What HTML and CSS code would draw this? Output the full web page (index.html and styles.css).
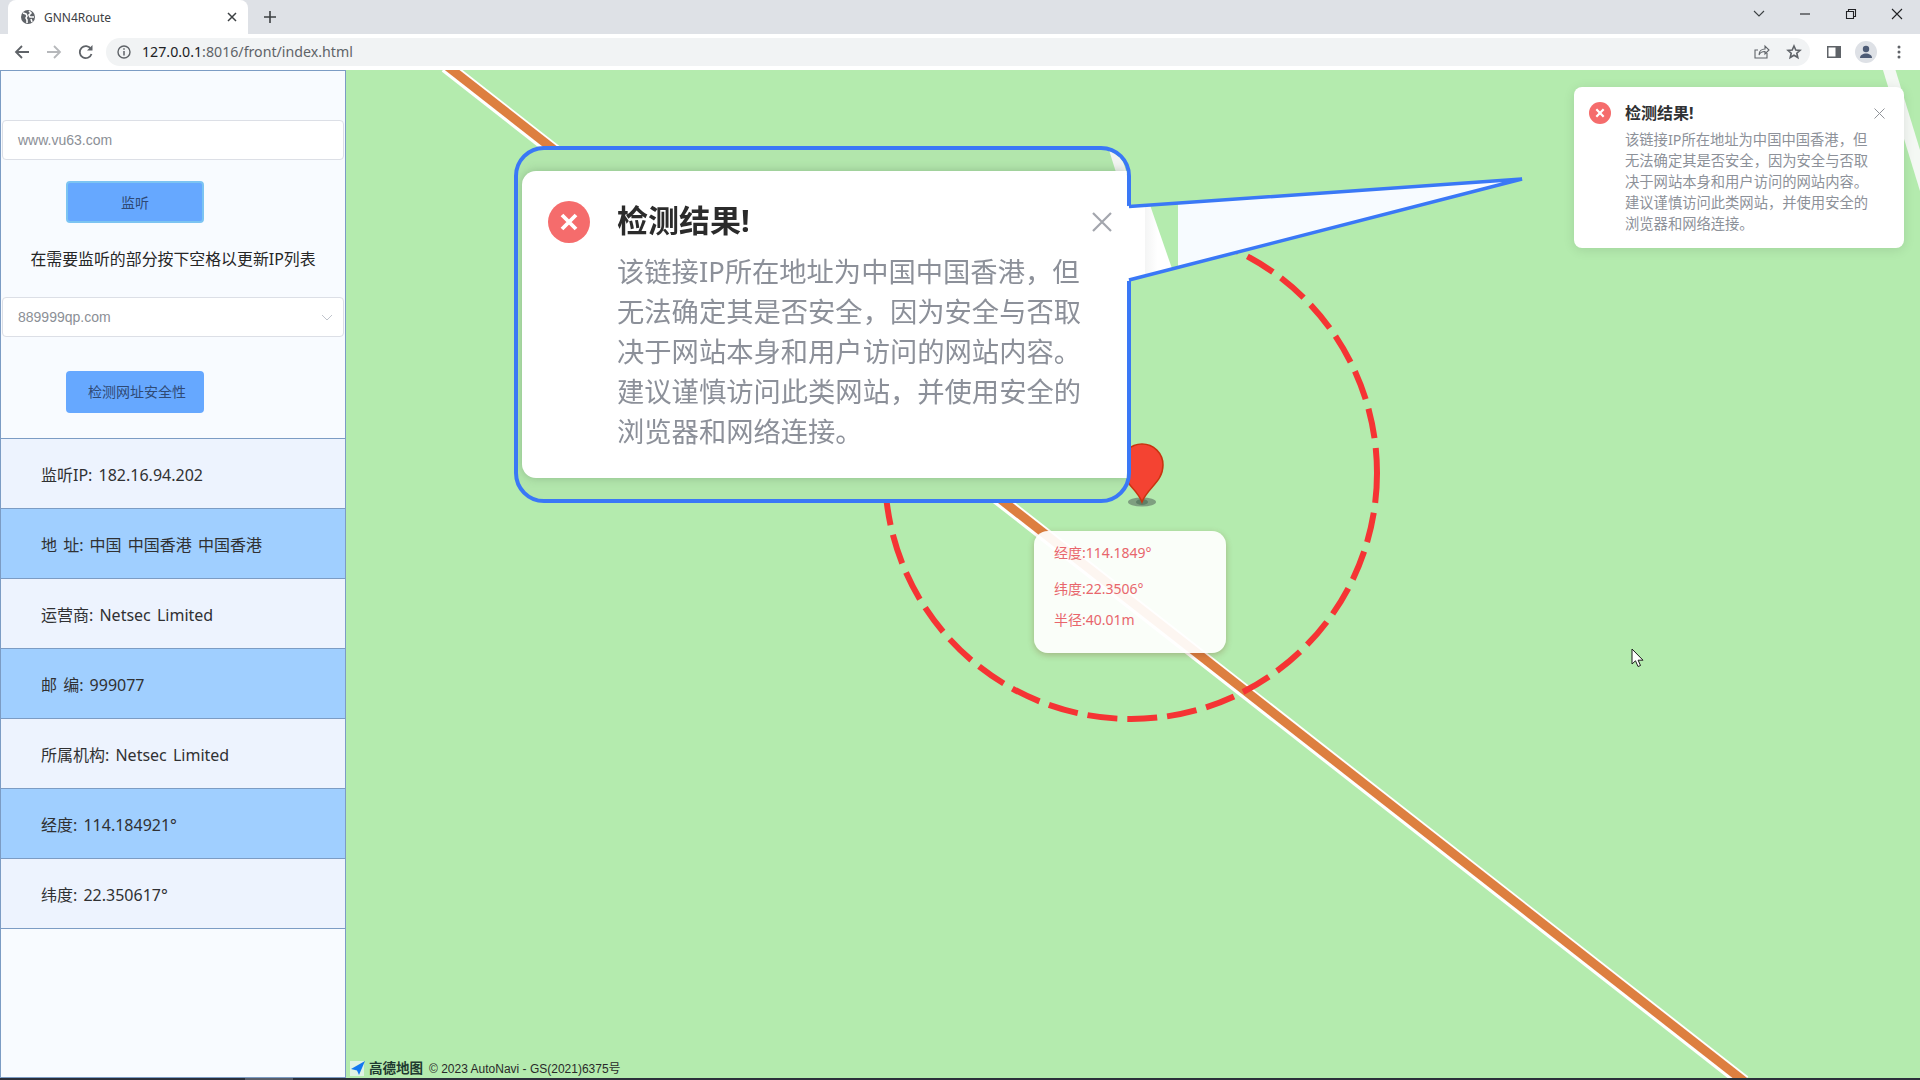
FILE: index.html
```html
<!DOCTYPE html>
<html lang="zh-CN">
<head>
    <meta charset="UTF-8">
    <title>GNN4Route</title>
    <link rel="stylesheet" href="styles.css">
</head>
<body>
    <div class="tabstrip">
        <div class="tab">
            <svg class="tab-icon" width="16" height="16" viewBox="0 0 16 16"><circle cx="8" cy="8" r="7" fill="#5f6368"/><path d="M3 4l3 1 1 2-1 2 1 2v3M9 2l2 2-2 2 1 2h4M11 10l1 3" fill="none" stroke="#fff" stroke-width="1.6"/></svg>
            <span class="tab-title">GNN4Route</span>
            <svg class="tab-close" width="10" height="10" viewBox="0 0 10 10"><path d="M1 1l8 8M9 1l-8 8" stroke="#3c4043" stroke-width="1.5"/></svg>
        </div>
        <svg class="new-tab" width="12" height="12" viewBox="0 0 12 12"><path d="M6 0v12M0 6h12" stroke="#3c4043" stroke-width="1.6"/></svg>
        <div class="window-controls">
            <svg width="12" height="8" viewBox="0 0 12 8"><path d="M1 1l5 5 5-5" fill="none" stroke="#3c4043" stroke-width="1.1"/></svg>
            <svg width="12" height="12" viewBox="0 0 12 12"><path d="M1 6h10" stroke="#202124" stroke-width="1.1"/></svg>
            <svg width="12" height="12" viewBox="0 0 12 12"><path d="M1.5 3.5h7v7h-7zM3.5 3.5v-2h7v7h-2" fill="none" stroke="#202124" stroke-width="1.1"/></svg>
            <svg width="12" height="12" viewBox="0 0 12 12"><path d="M1 1l10 10M11 1L1 11" stroke="#202124" stroke-width="1.1"/></svg>
        </div>
    </div>
    <div class="toolbar">
        <svg class="nav-icon" width="16" height="16" viewBox="0 0 16 16"><path d="M15 8H2M8 2L2 8l6 6" fill="none" stroke="#5f6368" stroke-width="1.8"/></svg>
        <svg class="nav-icon" width="16" height="16" viewBox="0 0 16 16"><path d="M1 8h13M8 2l6 6-6 6" fill="none" stroke="#b6b8bb" stroke-width="1.8"/></svg>
        <svg class="nav-icon" width="16" height="16" viewBox="0 0 16 16"><path d="M13.5 10a6 6 0 1 1-.6-5" fill="none" stroke="#5f6368" stroke-width="1.8"/><path d="M14.5 1v5.500H9z" fill="#5f6368"/></svg>
        <div class="omnibox">
            <svg width="14" height="14" viewBox="0 0 14 14"><circle cx="7" cy="7" r="6" fill="none" stroke="#5f6368" stroke-width="1.4"/><path d="M7 6v4.500M7 3.200v1.500" stroke="#5f6368" stroke-width="1.5"/></svg>
            <span class="url"><b>127.0.0.1</b>:8016/front/index.html</span>
            <svg class="omni-share" width="16" height="16" viewBox="0 0 16 16"><path d="M13 9v5H1V6h3M5 11c0-4 3-6 6-6V2l4 4-4 4V7.500c-3 0-5 1-6 3.500z" fill="none" stroke="#5f6368" stroke-width="1.1"/></svg>
            <svg class="omni-star" width="16" height="16" viewBox="0 0 16 16"><path d="M8 2l1.800 4 4.200.4-3.200 2.800 1 4.300L8 11.200l-3.800 2.300 1-4.300L2 6.400 6.200 6z" fill="none" stroke="#5f6368" stroke-width="1.600"/></svg>
        </div>
        <svg class="panel-icon" width="14" height="12" viewBox="0 0 14 12"><path d="M0 0h14v12H0z" fill="#5f6368"/><path d="M1.500 1.500h7v9h-7z" fill="#fff"/></svg>
        <div class="avatar">
            <svg width="14" height="14" viewBox="0 0 14 14"><circle cx="7" cy="4" r="3.200" fill="#4d5b75"/><path d="M1 13c0-3 3-4.500 6-4.500s6 1.500 6 4.500z" fill="#4d5b75"/></svg>
        </div>
        <svg class="menu-icon" width="4" height="14" viewBox="0 0 4 14"><circle cx="2" cy="2" r="1.500" fill="#5f6368"/><circle cx="2" cy="7" r="1.500" fill="#5f6368"/><circle cx="2" cy="12" r="1.500" fill="#5f6368"/></svg>
    </div>

    <div class="app">
        <aside class="sidebar">
            <div class="field first-field">www.vu63.com</div>
            <button class="btn btn-focus">监听</button>
            <p class="hint">在需要监听的部分按下空格以更新IP列表</p>
            <div class="field select-field">
                <span>889999qp.com</span>
                <svg width="12" height="7" viewBox="0 0 12 7"><path d="M1 1l5 5 5-5" fill="none" stroke="#c0c4cc" stroke-width="1"/></svg>
            </div>
            <button class="btn btn-check">检测网址安全性</button>
            <ul class="info-list">
                <li>监听IP: 182.16.94.202</li>
                <li>地 址: 中国 中国香港 中国香港</li>
                <li>运营商: Netsec Limited</li>
                <li>邮 编: 999077</li>
                <li>所属机构: Netsec Limited</li>
                <li>经度: 114.184921°</li>
                <li>纬度: 22.350617°</li>
            </ul>
        </aside>

        <main class="map">
            <svg class="map-layer" width="1574" height="1008" viewBox="346 70 1574 1008">
                <path d="M1888 66L1926 190" stroke="#f4f8f4" stroke-width="12"/>
                <path d="M446 66L1744 1082" stroke="#fff" stroke-width="14"/>
                <path d="M447 66L1745 1082" stroke="#dd7f40" stroke-width="9"/>
                <circle cx="1131" cy="473" r="246" fill="none" stroke="#f53434" stroke-width="6" stroke-dasharray="30 10"/>
                <ellipse cx="1142" cy="502" rx="14" ry="4.500" fill="#7f9f80"/>
                <ellipse cx="1142" cy="502" rx="6" ry="3" fill="#5f7f66"/>
                <path d="M1142 502C1137 488 1121 482 1121 465A21 21 0 1 1 1163 465C1163 482 1147 488 1142 502Z" fill="#f44332" stroke="#c9330f" stroke-width="1.500"/>
            </svg>

            <div class="marker-info">
                <p>经度:114.1849°</p>
                <p>纬度:22.3506°</p>
                <p>半径:40.01m</p>
            </div>

            <div class="callout">
                <div class="callout-road"></div>
                <div class="callout-card">
                    <svg class="callout-icon" width="42" height="42" viewBox="0 0 24 24"><circle cx="12" cy="12" r="12" fill="#f56c6c"/><path d="M8 8l8 8M16 8l-8 8" stroke="#fff" stroke-width="2.200"/></svg>
                    <div class="callout-text">
                        <h2>检测结果!</h2>
                        <p>该链接IP所在地址为中国中国香港，但<br>无法确定其是否安全，因为安全与否取<br>决于网站本身和用户访问的网站内容。<br>建议谨慎访问此类网站，并使用安全的<br>浏览器和网络连接。</p>
                    </div>
                    <svg class="callout-close" width="20" height="20" viewBox="0 0 20 20"><path d="M1 1l18 18M19 1L1 19" stroke="#a3a6ad" stroke-width="2.200"/></svg>
                </div>
            </div>
            <svg class="callout-pointer" width="400" height="115" viewBox="1126 170 400 115">
                <defs>
                    <linearGradient id="stripe" x1="0" x2="1" y1="0" y2="0">
                        <stop offset="0" stop-color="#e4e6e6"/>
                        <stop offset="0.6" stop-color="#fff"/>
                    </linearGradient>
                </defs>
                <path d="M1127 206L1522 179L1127 281Z" fill="#f7fbff"/>
                <path d="M1127 206.200L1150 205L1178 203V267L1127 281Z" fill="url(#stripe)"/>
                <path d="M1127 206.200L1145 205V276.600L1127 281Z" fill="#fff"/>
                <path d="M1150 205L1178 203V267L1172 268.600Z" fill="#b4ebae"/>
                <path d="M1129 206.500L1522 179L1129 280" fill="none" stroke="#3a78f6" stroke-width="3.500"/>
            </svg>

            <div class="notification">
                <svg class="notification-icon" width="22" height="22" viewBox="0 0 24 24"><circle cx="12" cy="12" r="12" fill="#f56c6c"/><path d="M8 8l8 8M16 8l-8 8" stroke="#fff" stroke-width="2.400"/></svg>
                <div class="notification-text">
                    <h2>检测结果!</h2>
                    <p>该链接IP所在地址为中国中国香港，但<br>无法确定其是否安全，因为安全与否取<br>决于网站本身和用户访问的网站内容。<br>建议谨慎访问此类网站，并使用安全的<br>浏览器和网络连接。</p>
                </div>
                <svg class="notification-close" width="11" height="11" viewBox="0 0 11 11"><path d="M.5.5l10 10M10.500.5l-10 10" stroke="#909399" stroke-width="1"/></svg>
            </div>

            <svg class="cursor" width="14" height="20" viewBox="0 0 14 20"><path d="M1 1v15l3.500-3.200L7 18.500l2.500-1-2.400-5.300H12z" fill="#fff" stroke="#1c1c1c" stroke-width="1"/></svg>

            <div class="map-credit">
                <svg width="16" height="17" viewBox="0 0 16 17"><path d="M0 2h14v15H0z" fill="#dff3e4"/><path d="M15 2L1 10l6 1.500L9 16z" fill="#1479f0"/></svg>
                <span class="credit-logo">高德地图</span>
                <span class="credit-copy">© 2023 AutoNavi - GS(2021)6375号</span>
            </div>
        </main>
    </div>
    <div class="bottom-strip"><span></span></div>
</body>
</html>
```

FILE: styles.css
```css
* {
    box-sizing: border-box;
}

body {
    margin: 0;
    height: 1080px;
    overflow: hidden;
    display: flex;
    flex-direction: column;
    font-family: "Noto Sans", "Noto Sans CJK SC", sans-serif;
    background-color: #fff;
}

p, h2, ul {
    margin: 0;
    padding: 0;
}

/* browser chrome */
.tabstrip {
    height: 34px;
    flex: none;
    display: flex;
    align-items: center;
    background-color: #dee1e6;
}

.tab {
    width: 240px;
    height: 34px;
    margin-left: 8px;
    padding: 0 11px 0 12px;
    display: flex;
    align-items: center;
    background-color: #fff;
    border-radius: 8px 8px 0 0;
}

.tab-title {
    margin-left: 8px;
    flex: 1;
    font-size: 12px;
    color: #3c4043;
}

.new-tab {
    margin-left: 16px;
}

.window-controls {
    margin-left: auto;
    width: 167px;
    padding: 0 17px 6px 0;
    display: flex;
    justify-content: space-between;
    align-items: center;
}

.toolbar {
    height: 36px;
    flex: none;
    padding-left: 14px;
    display: flex;
    align-items: center;
    background-color: #fff;
}

.nav-icon {
    margin-right: 16px;
}

.omnibox {
    width: 1704px;
    height: 28px;
    margin-left: -4px;
    padding: 0 8px 0 11px;
    display: flex;
    align-items: center;
    background-color: #f1f3f4;
    border-radius: 14px;
}

.url {
    margin: -2px 0 0 11px;
    flex: 1;
    font-size: 14.200px;
    color: #5f6368;
}

.url b {
    font-weight: 400;
    color: #202124;
}

.omni-star {
    margin-left: 16px;
}

.panel-icon {
    margin-left: 17px;
}

.avatar {
    width: 22px;
    height: 22px;
    margin-left: 14px;
    display: flex;
    align-items: center;
    justify-content: center;
    background-color: #dee1e6;
    border-radius: 50%;
}

.menu-icon {
    margin-left: 20px;
}

/* page */
.app {
    flex: 1;
    display: flex;
    min-height: 0;
}

.bottom-strip {
    height: 2px;
    flex: none;
    background-color: #2b2f3a;
}

.bottom-strip span {
    display: block;
    width: 48px;
    height: 2px;
    margin-left: 245px;
    background-color: #5a5e69;
}

.sidebar {
    width: 346px;
    flex: none;
    padding: 0 1px;
    background-color: #f8fbff;
    border: 1px solid #7c9cc4;
}

.field {
    height: 40px;
    padding: 0 10px 0 15px;
    display: flex;
    align-items: center;
    justify-content: space-between;
    font-family: "Liberation Sans", sans-serif;
    font-size: 14px;
    color: #8b8f96;
    background-color: #fff;
    border: 1px solid #dcdfe6;
    border-radius: 4px;
}

.first-field {
    margin-top: 49px;
}

.select-field {
    margin-top: 22px;
}

.btn {
    display: block;
    width: 138px;
    height: 42px;
    margin-left: 64px;
    padding: 0;
    font-family: inherit;
    font-size: 14px;
    color: #2f4a75;
    background-color: #66a8ff;
    border: none;
    border-radius: 4px;
}

.btn-focus {
    margin-top: 21px;
    border: 2px solid #7cc4f2;
}

.btn-check {
    margin-top: 34px;
    padding: 0 0 2px 4px;
}

.hint {
    margin-top: 21px;
    height: 31px;
    line-height: 30px;
    text-align: center;
    font-size: 15.900px;
    white-space: nowrap;
    color: #262626;
}

.info-list {
    margin: 25px -1px 0;
    list-style: none;
    border-top: 1px solid #7c9cc4;
}

.info-list li {
    height: 70px;
    padding-left: 40px;
    display: flex;
    align-items: center;
    font-size: 16px;
    word-spacing: 2px;
    color: #303133;
    background-color: #edf3fe;
    border-bottom: 1px solid #7c9cc4;
}

.info-list li:nth-child(even) {
    background-color: #a0cfff;
}

/* map */
.map {
    position: relative;
    flex: 1;
    overflow: hidden;
    background-color: #b4ebae;
}

.map-layer {
    position: absolute;
    left: 0;
    top: 0;
}

.marker-info {
    position: absolute;
    left: 688px;
    top: 461px;
    width: 192px;
    height: 122px;
    padding: 12px 20px;
    font-size: 14px;
    color: #e8666c;
    background-color: rgba(255, 255, 255, 0.93);
    border-radius: 14px;
    box-shadow: 0 2px 6px rgba(120, 60, 30, 0.3);
}

.marker-info p {
    height: 31px;
    line-height: 20px;
}

.marker-info p:nth-child(2) {
    height: 31px;
    padding-top: 5px;
}

.marker-info p:nth-child(3) {
    padding-top: 5px;
}

.callout {
    position: absolute;
    left: 168px;
    top: 76px;
    width: 617px;
    height: 357px;
    overflow: hidden;
    background-color: #b2e6ac;
    border: 4px solid #3a78f6;
    border-radius: 30px;
}

.callout-road {
    position: absolute;
    right: 0;
    top: 0;
    width: 30px;
    height: 24px;
    background-color: #f2f4f2;
    clip-path: polygon(40% 0, 75% 0, 100% 100%, 65% 100%);
}

.callout-card {
    position: absolute;
    left: 4px;
    top: 21px;
    right: 0;
    height: 307px;
    background-color: #fff;
    border-radius: 14px 0 0 14px;
    box-shadow: 0 0 10px rgba(80, 110, 80, 0.35);
}

.callout-icon {
    position: absolute;
    left: 26px;
    top: 30px;
    filter: blur(0.4px);
}

.callout-text {
    position: absolute;
    left: 95px;
    top: 25px;
    filter: blur(0.6px);
}

.callout-text h2 {
    font-size: 31px;
    line-height: 48px;
    font-weight: 700;
    color: #2b2b2b;
}

.callout-text p {
    margin-top: 8px;
    font-size: 27.300px;
    line-height: 40px;
    white-space: nowrap;
    color: #8c9099;
}

.callout-close {
    position: absolute;
    left: 570px;
    top: 41px;
}

.callout-pointer {
    position: absolute;
    left: 780px;
    top: 100px;
}

.notification {
    position: absolute;
    left: 1228px;
    top: 17px;
    width: 330px;
    height: 161px;
    background-color: #fff;
    border-radius: 8px;
    box-shadow: 0 2px 12px rgba(0, 0, 0, 0.1);
}

.notification-icon {
    position: absolute;
    left: 15px;
    top: 15px;
}

.notification-text {
    position: absolute;
    left: 51px;
    top: 14px;
}

.notification-text h2 {
    font-size: 16px;
    line-height: 24px;
    font-weight: 700;
    color: #303133;
}

.notification-text p {
    margin-top: 4px;
    font-size: 14.300px;
    line-height: 21px;
    white-space: nowrap;
    color: #8d9199;
}

.notification-close {
    position: absolute;
    left: 300px;
    top: 21px;
}

.cursor {
    position: absolute;
    left: 1285px;
    top: 578px;
}

.map-credit {
    position: absolute;
    left: 4px;
    bottom: 1px;
    display: flex;
    align-items: center;
}

.credit-logo {
    margin-left: 3px;
    font-size: 13.500px;
    font-weight: 700;
    color: #1f3a30;
}

.credit-copy {
    margin-left: 6px;
    font-family: "Liberation Sans", "Noto Sans CJK SC", sans-serif;
    font-size: 12px;
    color: #2a2a2a;
}
```
